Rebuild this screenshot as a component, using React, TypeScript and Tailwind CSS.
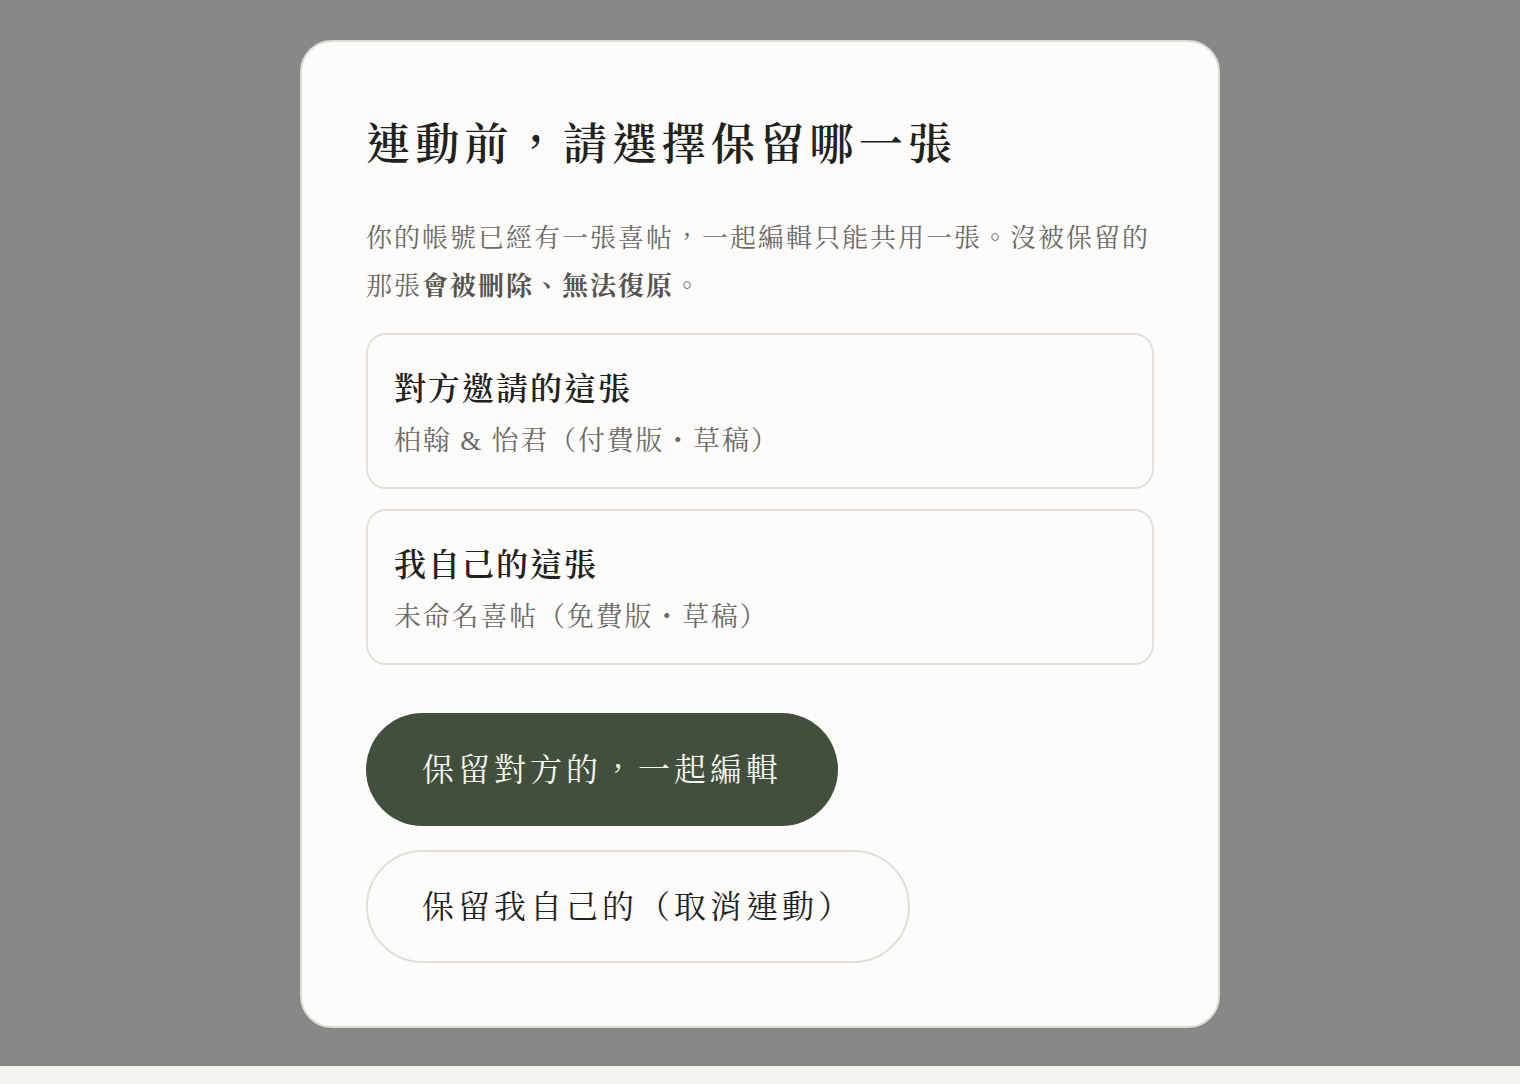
import React from "react";

const serif = "font-['Liberation_Serif','Noto_Serif_CJK_TC','Noto_Serif_TC',serif]";

function Option({ title, detail }: { title: string; detail: string }) {
  return (
    <button className="w-full text-left rounded-[20px] border-2 border-[#e4e1dc] bg-[#fdfcfa] px-[26px] pt-[32px] pb-[26px]">
      <div className="text-[32px] leading-[44px] font-semibold tracking-[2px] text-[#1f231e]">{title}</div>
      <div className="mt-[10px] text-[27px] leading-[40px] tracking-[1.8px] text-[#6b6a66]">{detail}</div>
    </button>
  );
}

export default function App() {
  return (
    <div className={`min-h-screen bg-[#f4f3ef] ${serif}`}>
      <div className="h-[1066px] bg-[#888887] flex justify-center pt-[40px]">
        <div className="w-[920px] h-[988px] rounded-[32px] border-2 border-[#dedcd8] bg-[#fdfcfa] px-[64px] pt-[72px]">
          <h2 className="text-[44px] leading-[64px] font-semibold tracking-[0.12em] text-[#1f231e]">
            連動前，請選擇保留哪一張
          </h2>
          <p className="mt-[37px] text-[26px] leading-[48px] tracking-[2px] text-[#6b6a66]">
            你的帳號已經有一張喜帖，一起編輯只能共用一張。沒被保留的那張
            <strong className="font-bold text-[#55544f]">會被刪除、無法復原</strong>。
          </p>

          <div className="mt-[22px] flex flex-col gap-[20px]">
            <Option title="對方邀請的這張" detail="柏翰 & 怡君（付費版・草稿）" />
            <Option title="我自己的這張" detail="未命名喜帖（免費版・草稿）" />
          </div>

          <div className="mt-[48px] flex flex-col items-start gap-[24px]">
            <button className="h-[113px] rounded-full bg-[#414f3d] px-[56px] text-[32px] tracking-[4px] text-[#f7f5ef]">
              保留對方的，一起編輯
            </button>
            <button className="h-[113px] rounded-full border-2 border-[#e2dfda] bg-[#fdfcfa] px-[54px] text-[32px] tracking-[4px] text-[#1f231e]">
              保留我自己的（取消連動）
            </button>
          </div>
        </div>
      </div>
    </div>
  );
}
